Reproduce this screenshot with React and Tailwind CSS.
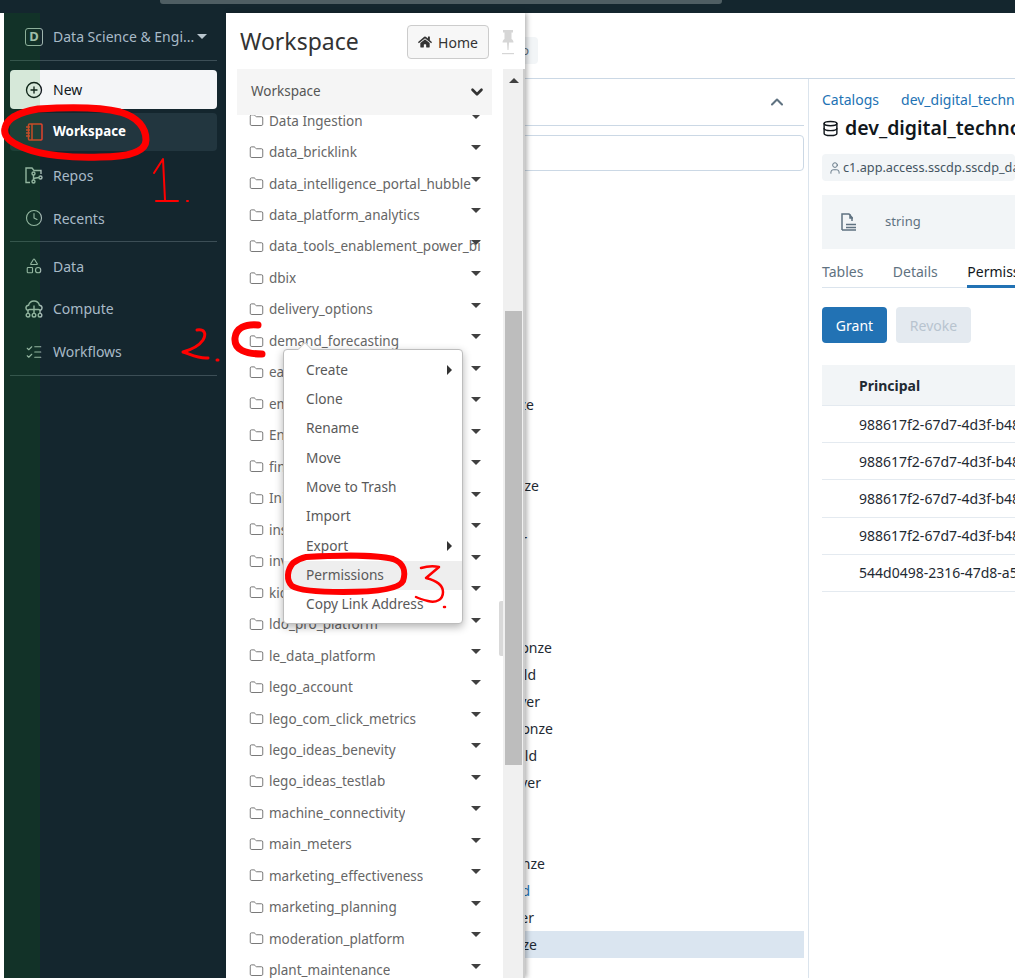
import { CirclePlus, Clock, Shapes, ListChecks, Folder, ChevronDown, ChevronUp, ChevronRight, Database, User } from 'lucide-react';
import { FaHome } from 'react-icons/fa';

const FOLDERS = [
  'Data Ingestion', 'data_bricklink', 'data_intelligence_portal_hubble', 'data_platform_analytics',
  'data_tools_enablement_power_bi', 'dbix', 'delivery_options', 'demand_forecasting', 'easy_reports',
  'employee_data', 'Enterprise', 'finance', 'Initiatives', 'insights', 'inventory', 'kids_portal',
  'ldo_pro_platform', 'le_data_platform', 'lego_account', 'lego_com_click_metrics', 'lego_ideas_benevity',
  'lego_ideas_testlab', 'machine_connectivity', 'main_meters', 'marketing_effectiveness', 'marketing_planning',
  'moderation_platform', 'plant_maintenance',
];

const MENU = [
  { label: 'Create', arrow: true }, { label: 'Clone' }, { label: 'Rename' }, { label: 'Move' },
  { label: 'Move to Trash' }, { label: 'Import' }, { label: 'Export', arrow: true },
  { label: 'Permissions', active: true }, { label: 'Copy Link Address' },
];

// rows of the tree behind the flyout, only the tail of each name shows
const TREE = [
  { name: 'bronze', w: 'w-[308px]' }, {}, {}, { name: 'bronze', w: 'w-[313px]' }, {}, { name: 'silver', w: 'w-[301px]' },
  {}, {}, {}, { name: 'bronze', w: 'w-[326px]' }, { name: 'gold', w: 'w-[310px]' }, { name: 'silver', w: 'w-[314px]' },
  { name: 'bronze', w: 'w-[327px]' }, { name: 'gold', w: 'w-[311px]' }, { name: 'silver', w: 'w-[315px]' }, {}, {},
  { name: 'bronze', w: 'w-[319px]' }, { name: 'gold', w: 'w-[304px]', link: true }, { name: 'silver', w: 'w-[308px]' },
  { name: 'bronze', w: 'w-[311px]', selected: true },
];

const PRINCIPALS = [
  '988617f2-67d7-4d3f-b48a-1c', '988617f2-67d7-4d3f-b48a-1c', '988617f2-67d7-4d3f-b48a-1c',
  '988617f2-67d7-4d3f-b48a-1c', '544d0498-2316-47d8-a5c1-90',
];

function NotebookIcon({ className }) {
  return (
    <svg viewBox="0 0 18 18" fill="none" stroke="currentColor" strokeWidth="1.5" className={className}>
      <rect x="3.5" y="1" width="13.500" height="16" rx="1" />
      <path d="M7 1v16M1 4h4M1 7h4M1 10h4M1 13h4" />
    </svg>
  );
}

function RepoIcon({ className }) {
  return (
    <svg viewBox="0 0 18 18" fill="none" stroke="currentColor" strokeWidth="1.4" className={className}>
      <path d="M5 16.500H1V2h6l2 2.500h7V8" />
      <circle cx="8.5" cy="7.500" r="1.500" />
      <circle cx="8.5" cy="15.500" r="1.500" />
      <circle cx="15.5" cy="11.500" r="1.500" />
      <path d="M8.500 9v5M8.500 12.500c2 0 3-1 5.500-1" />
    </svg>
  );
}

function ComputeIcon({ className }) {
  return (
    <svg viewBox="0 0 18 18" fill="none" stroke="currentColor" strokeWidth="1.4" className={className}>
      <path d="M3 10.500C1.500 10 .800 8.800 1 7.500 1.300 6 2.500 5.200 3.600 5.200 4.200 2.800 6.400 1 9 1s4.800 1.800 5.400 4.200c1.100 0 2.300.8 2.600 2.300.2 1.300-.5 2.500-2 3" />
      <path d="M9 5.500v7.500M3 13v-2c0-1 .7-1.500 1.500-1.500h9c.8 0 1.500.5 1.500 1.500v2" />
      <circle cx="3" cy="15.200" r="1.800" />
      <circle cx="9" cy="15.200" r="1.800" />
      <circle cx="15" cy="15.200" r="1.800" />
    </svg>
  );
}

function PinIcon() {
  return (
    <svg viewBox="0 0 12 25" className="w-[12px] h-[25px] fill-[#d6d6d6]">
      <path d="M1 0h10v2.500H9.500V9c1 .7 2 1.800 2 3.500H7L6.500 20h-1L5 12.500H.5C.5 10.800 1.500 9.700 2.500 9V2.500H1z" />
      <rect x="0" y="23" width="12" height="1.200" />
    </svg>
  );
}

function DocIcon() {
  return (
    <svg viewBox="0 0 16 18" fill="none" stroke="#5f7281" strokeWidth="1.500" className="w-[16px] h-[18px]">
      <path d="M1 17V1h7l3 3.500V8M9 1v4h3" />
      <path d="M1 17h4M5 11.500h10M5 14.500h10M5 17h10" />
    </svg>
  );
}

function Caret({ className }) {
  return <span className={`border-x-[5px] border-x-transparent border-t-[5px] border-t-[#404040] ${className}`} />;
}

function NavItem({ icon: Icon, label }) {
  return (
    <div className="h-[42.700px] pl-[15px] flex items-center gap-[10px] text-[#a8bac7]">
      <Icon className="w-[18px] h-[18px] text-[#a6bbb5] shrink-0" strokeWidth={1.500} />
      <span className="text-[14px]">{label}</span>
    </div>
  );
}

function Sidebar() {
  return (
    <div className="w-[222px] shrink-0 bg-[#14262e] pl-[6px] pr-[9px]">
      <div className="border-b border-[#3c4e56] h-[48px] flex items-center pl-[15px] gap-[10px]">
        <span className="w-[18px] h-[18px] rounded-[3px] border-[1.500px] border-[#9fb4ae] text-[#b4c6c0] text-[13px] font-bold flex items-center justify-center">D</span>
        <span className="text-[14px] text-[#a8bac7] whitespace-nowrap">Data Science &amp; Engi...</span>
        <Caret className="-ml-[7px] border-t-[#b9c6ce]" />
      </div>
      <div className="mt-[9px] h-[39px] rounded-[4px] bg-[#f4f5f7] pl-[15px] flex items-center gap-[10px] text-[#11171c]">
        <CirclePlus className="w-[18px] h-[18px]" strokeWidth={1.800} />
        <span className="text-[14px]">New</span>
      </div>
      <div className="mt-[4px] h-[38px] pb-[0px] rounded-[4px] bg-[#22363f] pl-[15px] flex items-center gap-[10px] text-white">
        <NotebookIcon className="w-[18px] h-[18px] text-[#e0442c]" />
        <span className="text-[13.300px] font-bold">Workspace</span>
      </div>
      <div className="mt-[3px] border-b border-[#3c4e56] pb-[1.500px]">
        <NavItem icon={RepoIcon} label="Repos" />
        <NavItem icon={Clock} label="Recents" />
      </div>
      <div className="mt-[3px] border-b border-[#3c4e56] pb-[2px]">
        <NavItem icon={Shapes} label="Data" />
        <NavItem icon={ComputeIcon} label="Compute" />
        <NavItem icon={ListChecks} label="Workflows" />
      </div>
    </div>
  );
}

function ContextMenu() {
  return (
    <div className="absolute left-[57px] top-[336px] w-[180px] h-[275px] z-20 bg-white border border-[#bdbdbd] rounded-[4px] shadow-[0_3px_8px_rgba(0,0,0,0.3)] py-[5.500px]">
      <span className="absolute left-[16px] -top-[6px] w-[10px] h-[10px] rotate-45 bg-white border-l border-t border-[#cfcfcf]" />
      {MENU.map((m) => (
        <div key={m.label} className={`h-[29.300px] pl-[22px] pr-[10px] flex items-center justify-between text-[13.700px] text-[#595959] ${m.active ? 'bg-[#eeeeee]' : ''}`}>
          <span>{m.label}</span>
          {m.arrow && <span className="border-y-[5px] border-y-transparent border-l-[5px] border-l-[#333]" />}
        </div>
      ))}
    </div>
  );
}

function WorkspacePanel() {
  return (
    <div className="absolute left-[226px] top-[13px] bottom-0 w-[299px] z-10 bg-white flex flex-col shadow-[2px_0_5px_rgba(0,0,0,0.3)]">
      <div className="h-[56px] shrink-0 flex items-start pl-[14px]">
        <h1 className="w-[119px] text-[23px] leading-[34px] mt-[11px] text-[#333]">Workspace</h1>
        <button className="ml-[48px] mt-[12px] w-[82px] h-[34px] rounded-[4px] border border-[#cccccc] bg-[#f7f7f7] flex items-center justify-center gap-[6px] text-[14px] text-[#333]">
          <FaHome className="w-[14px] h-[14px]" />
          Home
        </button>
        <span className="ml-[13px] mt-[17px]"><PinIcon /></span>
      </div>
      <div className="flex-1 flex min-h-0">
        <div className="w-[277px] flex flex-col min-h-0 relative">
          <div className="ml-[11px] w-[255px] h-[46px] shrink-0 bg-[#f5f5f5] pl-[14px] pr-[6px] pb-[1px] flex items-center justify-between text-[13.500px] text-[#555] relative z-10">
            Workspace
            <ChevronDown className="w-[18px] h-[18px] text-[#333]" strokeWidth={3.500} />
          </div>
          <div className="-mt-[10px] overflow-hidden">
            {FOLDERS.map((f) => (
              <div key={f} className="relative h-[31.480px] pl-[23px] w-[256px] flex items-center gap-[5px] text-[13.500px] text-[#666] whitespace-nowrap">
                <Folder className="w-[15px] h-[15px] shrink-0 text-[#666]" strokeWidth={1.400} />
                <span className="overflow-hidden">{f}</span>
                <Caret className="absolute left-[245px] top-[9px]" />
              </div>
            ))}
          </div>
          <div className="absolute right-0 top-[532px] w-[4px] h-[55px] rounded-l-[2px] bg-[#d9d9d9]" />
        </div>
        <div className="w-[22px] bg-[#f0f0f0] border-r-2 border-[#cccccc] pl-[2px] pr-[1px]">
          <div className="h-[22px] flex items-center justify-center">
            <span className="border-x-[5px] border-x-transparent border-b-[5px] border-b-[#404040]" />
          </div>
          <div className="mt-[220px] h-[454px] bg-[#bdbdbd]" />
        </div>
      </div>
      <ContextMenu />
    </div>
  );
}

function TreePane() {
  return (
    <div className="w-[583px] shrink-0 border-r border-[#dbe4ed] pr-[4px]">
      <div className="h-[47px] border-b border-[#cbd8e5] flex items-center justify-end pr-[17px]">
        <ChevronUp className="w-[20px] h-[20px] text-[#5f7281]" strokeWidth={2.500} />
      </div>
      <div className="mt-[9px] h-[36px] border border-[#cbd8e5] rounded-[4px]" />
      <div className="mt-[220px]">
        {TREE.map((r, i) => (
          <div key={i} className={`h-[27px] flex items-center text-[14px] ${r.selected ? 'bg-[#dae5f0]' : ''} ${r.link ? 'text-[#2272b4]' : 'text-[#1f2a33]'}`}>
            {r.name && <span className={`${r.w} text-right`}>{r.name}</span>}
          </div>
        ))}
      </div>
    </div>
  );
}

function DetailPane() {
  return (
    <div className="flex-1 overflow-hidden pl-[13px] whitespace-nowrap">
      <div className="mt-[10px] h-[20px] flex items-center gap-[11px] text-[14px] text-[#2272b4]">
        Catalogs
        <ChevronRight className="w-[12px] h-[12px] text-[#5f7281]" />
        dev_digital_technology
      </div>
      <div className="mt-[4px] h-[30px] flex items-center gap-[6px] text-[#11171c]">
        <Database className="w-[17px] h-[17px] shrink-0" strokeWidth={2} />
        <span className="text-[19.500px] font-semibold">dev_digital_technology</span>
      </div>
      <div className="mt-[11px] h-[27px] rounded-[4px] bg-[#f2f5f7] flex items-center pl-[6px] gap-[1px] text-[12.700px] text-[#445461]">
        <User className="w-[14px] h-[14px] shrink-0 text-[#5f7281]" strokeWidth={1.600} />
        c1.app.access.sscdp.sscdp_data_owners
      </div>
      <div className="mt-[14px] h-[54px] bg-[#f2f5f7] flex items-center pl-[19px] gap-[28px] text-[13px] text-[#5f7281]">
        <DocIcon />
        string
      </div>
      <div className="mt-[12px] h-[27px] border-b border-[#dbe4ed] flex gap-[29.500px] text-[14px] text-[#5f7281]">
        <span>Tables</span>
        <span>Details</span>
        <span className="text-[#11171c] border-b-[3px] border-[#2272b4] h-[27px] pr-[20px]">Permissions</span>
      </div>
      <div className="mt-[19px] flex gap-[9px] text-[14px]">
        <button className="w-[65px] h-[36px] rounded-[4px] bg-[#2272b4] text-white">Grant</button>
        <button className="w-[75px] h-[36px] rounded-[4px] bg-[#e4eaf0] text-[#b8c4cf]">Revoke</button>
      </div>
      <div className="mt-[22px] h-[41px] bg-[#f2f5f7] border-b border-[#e4eaf0] pl-[37px] flex items-center text-[14px] font-bold text-[#1f2a33]">Principal</div>
      {PRINCIPALS.map((p, i) => (
        <div key={i} className="h-[37.200px] border-b border-[#e4eaf0] pl-[37px] flex items-center text-[14px] text-[#1f2a33]">{p}</div>
      ))}
    </div>
  );
}

function Annotations() {
  return (
    <svg viewBox="0 0 1015 978" className="absolute inset-0 w-[1015px] h-[978px] z-30 pointer-events-none" fill="none" stroke="#ff0000" strokeLinecap="round" strokeLinejoin="round">
      <path strokeWidth="7" d="M38 109C70 107 100 107 120 112C138 117 146 128 146 140C146 152 128 157 100 157C70 158 42 155 27 149C10 143 3 136 5 128C7 118 20 112 38 109" />
      <path strokeWidth="2" d="M154 173L163 159L165 200M156 201H178M187 201h1" />
      <path strokeWidth="3" d="M197 330C204 329 207 333 203 340C199 346 190 350 183 352C190 354 198 359 208 358M217 360h1" />
      <path strokeWidth="7" d="M258 325C245 324 236 328 235 338C234 350 246 354 262 354" />
      <path strokeWidth="6" d="M306 557C340 555 378 555 393 559C404 563 406 572 403 581C399 590 370 592 343 592C320 592 300 591 292 586C286 580 287 570 293 563C297 560 301 558 306 557" />
      <path strokeWidth="2.500" d="M421 568C428 566 434 566 439 567L426 578C434 580 443 584 443 592C443 600 436 603 428 601C424 600 420 599 416 597M444 607h1" />
    </svg>
  );
}

export default function App() {
  return (
    <div className="relative w-[1015px] h-[978px] overflow-hidden bg-white flex flex-col font-['Noto_Sans',sans-serif]">
      <div className="h-[13px] shrink-0 bg-[#14262e]">
        <div className="ml-[160px] w-[562px] h-[4px] rounded-b-[3px] bg-[#4f5e63]" />
      </div>
      <div className="flex-1 flex min-h-0">
        <div className="w-[4px] shrink-0" />
        <Sidebar />
        <div className="flex-1 min-w-0 flex flex-col">
          <div className="h-[66px] shrink-0 border-b border-[#cbd8e5] flex items-start">
            <span className="ml-[250px] mt-[24px] w-[62px] h-[27px] rounded-[4px] bg-[#f2f5f7] text-[13px] text-[#5f7281] flex items-center justify-end pr-[9px]">Info</span>
          </div>
          <div className="flex-1 flex min-h-0">
            <TreePane />
            <DetailPane />
          </div>
        </div>
      </div>
      <div className="absolute left-[4px] top-[13px] bottom-0 w-[36px] bg-[#038d00]/[0.12] pointer-events-none" />
      <WorkspacePanel />
      <Annotations />
    </div>
  );
}
